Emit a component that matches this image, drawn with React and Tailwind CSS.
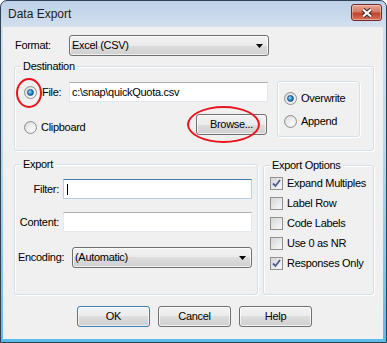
import React from "react";

/* Win7-style radio button */
function Radio({ checked }) {
  return (
    <div className="flex h-[13px] w-[13px] shrink-0 items-center justify-center rounded-full border border-[#8e8f8f] bg-[linear-gradient(135deg,#d4d4d4,#f7f7f7)]">
      <div className="flex h-[9px] w-[9px] items-center justify-center rounded-full bg-[linear-gradient(135deg,#e0e0e0,#ffffff)]">
        {checked && (
          <div className="h-[7px] w-[7px] rounded-full border border-[#1b4f86] bg-[radial-gradient(circle_at_35%_35%,#a6e0fb_0%,#2f8fd6_45%,#0f4f93_100%)]" />
        )}
      </div>
    </div>
  );
}

/* Win7-style checkbox */
function Check({ checked }) {
  return (
    <div className="flex h-[13px] w-[13px] shrink-0 items-center justify-center border border-[#8e8f8f] bg-white">
      <div className="flex h-[11px] w-[11px] items-center justify-center bg-[linear-gradient(135deg,#d6d6d6,#f8f8f8)]">
        {checked && (
          <svg width="9" height="9" viewBox="0 0 9 9">
            <path d="M1 4.5 L3.5 7 L8 1" fill="none" stroke="#4a5f97" strokeWidth="1.8" />
          </svg>
        )}
      </div>
    </div>
  );
}

/* Rounded group box with its caption sitting on the top line */
function Group({ label, className, children }) {
  return (
    <div className={`flex flex-col rounded-[3px] border border-[#d5dfe5] shadow-[inset_1px_1px_0_#fff,1px_1px_0_#fff] ${className}`}>
      {label && (
        <span className="-mt-[7px] ml-[6px] self-start bg-[#f0f0f0] px-[2px] leading-[13px]">{label}</span>
      )}
      {children}
    </div>
  );
}

function Button({ className, children }) {
  return (
    <div
      className={`flex h-[21px] items-center justify-center rounded-[3px] border bg-[linear-gradient(to_bottom,#f2f2f2_0%,#ebebeb_50%,#dddddd_50%,#cfcfcf_100%)] shadow-[inset_0_0_0_1px_rgba(255,255,255,0.7)] ${className}`}
    >
      {children}
    </div>
  );
}

function Dropdown({ value, className }) {
  return (
    <div
      className={`flex h-[21px] items-center rounded-[3px] border border-[#707070] bg-[linear-gradient(to_bottom,#f2f2f2_0%,#ebebeb_50%,#dddddd_50%,#cfcfcf_100%)] pl-[2px] pr-[5px] shadow-[inset_0_0_0_1px_rgba(255,255,255,0.7)] ${className}`}
    >
      <span>{value}</span>
      <svg className="ml-auto" width="7" height="4" viewBox="0 0 7 4">
        <polygon points="0,0 7,0 3.5,4" fill="#000" />
      </svg>
    </div>
  );
}

function TextBox({ focused, className, children }) {
  return (
    <div
      className={`flex h-[20px] items-center border bg-white pl-[2px] ${
        focused ? "border-[#b5cfe7] border-t-[#3d7bad]" : "border-[#e3e9ef] border-t-[#abadb3]"
      } ${className}`}
    >
      {children}
    </div>
  );
}

export default function App() {
  return (
    <div className="relative flex h-[343px] w-[387px] flex-col rounded-t-[7px] border border-[#2e4256] bg-[linear-gradient(to_bottom,#bdd1e9_0px,#d2dfee_26px,#b9daef_140px,#5cbbe9_100%)] font-['Liberation_Sans',Arial,sans-serif] text-[11px] leading-[13px] tracking-[-0.3px] text-black">
      {/* Title bar */}
      <div className="flex h-[26px] items-start pl-[7px] pr-[4px]">
        <span className="mt-[6px] text-[12px] leading-[14px] tracking-normal text-[#1b1b1b]">Data Export</span>
        <div className="ml-auto mt-[3px] flex h-[17px] w-[31px] items-center justify-center rounded-[3px] border border-[#6e2a24] bg-[linear-gradient(to_bottom,#e9a696_0%,#d57a66_45%,#c1432d_55%,#d9725b_100%)] shadow-[inset_0_0_0_1px_rgba(255,255,255,0.35)]">
          <svg width="14" height="10" viewBox="0 0 14 10">
            <path d="M3 1.5 L11 8.5 M11 1.5 L3 8.5" stroke="#4a2420" strokeWidth="4.2" />
            <path d="M3 1.5 L11 8.5 M11 1.5 L3 8.5" stroke="#ffffff" strokeWidth="2.2" />
          </svg>
        </div>
      </div>

      {/* Client area */}
      <div className="mb-[3px] ml-[2px] mr-[3px] flex flex-1 flex-col bg-[#f0f0f0]">
        {/* Format */}
        <div className="mt-[8px] flex items-center pl-[12px]">
          <span className="w-[54px]">Format:</span>
          <Dropdown value="Excel (CSV)" className="w-[200px]" />
        </div>

        {/* Destination */}
        <Group label="Destination" className="ml-[11px] mt-[10px] h-[85px] w-[360px]">
          <div className="mt-[8px] flex pl-[9px]">
            <div className="flex w-[244px] flex-col">
              <div className="mt-[1px] flex h-[20px] items-center">
                <Radio checked />
                <span className="ml-[5px]">File:</span>
                <TextBox className="ml-auto w-[199px]">{"c:\\snap\\quickQuota.csv"}</TextBox>
              </div>
              <div className="mt-[12px] flex items-start">
                <div className="mt-[7px] flex items-center">
                  <Radio />
                  <span className="ml-[4px]">Clipboard</span>
                </div>
                <Button className="ml-auto mr-[1px] w-[71px] border-[#707070]">Browse...</Button>
              </div>
            </div>
            <Group className="ml-[9px] h-[56px] w-[83px]">
              <div className="ml-[6px] mt-[10px] flex h-[13px] items-center">
                <Radio checked />
                <span className="ml-[4px]">Overwrite</span>
              </div>
              <div className="ml-[6px] mt-[10px] flex h-[13px] items-center">
                <Radio />
                <span className="ml-[4px]">Append</span>
              </div>
            </Group>
          </div>
        </Group>

        {/* Export + Export Options */}
        <div className="ml-[11px] mt-[13px] flex items-start">
          <Group label="Export" className="h-[131px] w-[244px]">
            <div className="mt-[8px] flex w-[237px] flex-col">
              <div className="flex h-[20px] items-center">
                <span className="w-[44px] text-right">Filter:</span>
                <TextBox focused className="ml-[4px] w-[189px]">
                  <div className="ml-[1px] h-[11px] w-[1px] bg-black" />
                </TextBox>
              </div>
              <div className="mt-[13px] flex h-[20px] items-center">
                <span className="w-[44px] text-right">Content:</span>
                <TextBox className="ml-[4px] w-[189px]" />
              </div>
              <div className="mt-[15px] flex h-[21px] items-center">
                <span className="pl-[3px]">Encoding:</span>
                <Dropdown value="(Automatic)" className="ml-auto w-[180px]" />
              </div>
            </div>
          </Group>

          <Group label="Export Options" className="ml-[5px] mt-[1px] h-[130px] w-[111px]">
            <div className="mt-[1px] flex flex-col pl-[6px]">
              {[
                ["Expand Multiples", true],
                ["Label Row", false],
                ["Code Labels", false],
                ["Use 0 as NR", false],
                ["Responses Only", true],
              ].map(([label, checked]) => (
                <div key={label} className="flex h-[20px] items-center">
                  <Check checked={checked} />
                  <span className="ml-[4px]">{label}</span>
                </div>
              ))}
            </div>
          </Group>
        </div>

        {/* Dialog buttons */}
        <div className="mt-[11px] flex justify-center gap-[8px] pl-[3px]">
          <Button className="w-[73px] border-[#3c7fb1] shadow-[inset_0_0_0_1px_#a6dcf5]">OK</Button>
          <Button className="w-[73px] border-[#707070]">Cancel</Button>
          <Button className="w-[73px] border-[#707070]">Help</Button>
        </div>
      </div>

      {/* Red annotation ellipses drawn over the dialog */}
      <div className="absolute left-[15px] top-[77px] h-[30px] w-[26px] rounded-[50%] border-2 border-[#e8141b]" />
      <div className="absolute left-[186px] top-[105px] h-[37px] w-[73px] rounded-[50%] border-2 border-[#e8141b]" />
    </div>
  );
}
